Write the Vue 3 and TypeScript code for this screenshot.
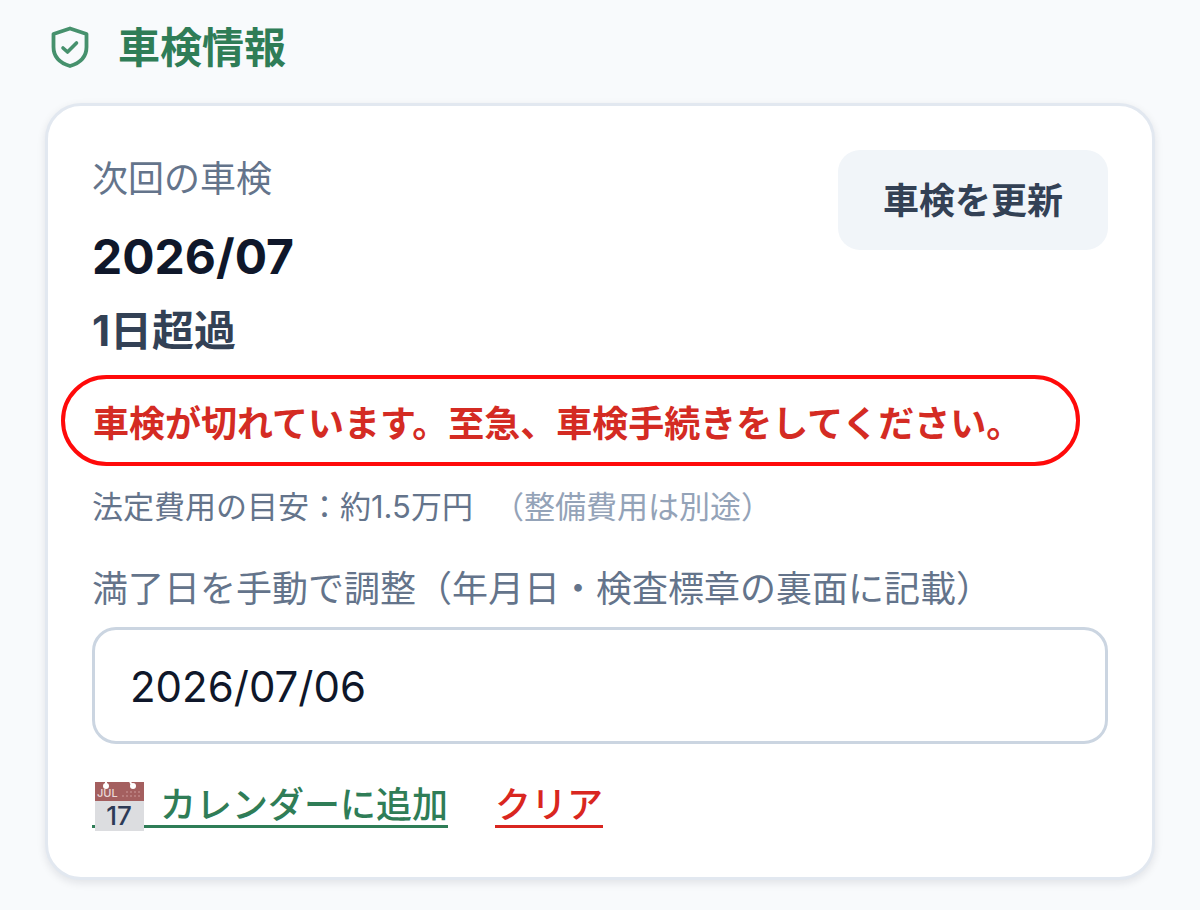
<script setup lang="ts">
import { ref } from 'vue'

const expiryDate = ref('2026/07/06')

function clearDate(): void {
  expiryDate.value = ''
}
</script>

<template>
  <main class="page">
    <header class="heading">
      <svg class="shield" viewBox="0 0 44 44" fill="none" stroke="currentColor" stroke-linejoin="round" aria-hidden="true">
        <path d="M22 2.500 L38.500 8 V21 C38.500 31 32 37 22 40 C12 37 5.500 31 5.500 21 V8 Z" stroke-width="3.800" />
        <path d="M15 22 L19.500 26 L28.500 17" stroke-width="3.600" stroke-linecap="round" />
      </svg>
      <h1 class="title">車検情報</h1>
    </header>

    <section class="card">
      <div class="top">
        <div class="summary">
          <p class="label">次回の車検</p>
          <p class="month">2026/07</p>
          <p class="overdue">1日超過</p>
        </div>
        <button class="update" type="button">車検を更新</button>
      </div>

      <p class="alert">車検が切れています。至急、車検手続きをしてください。</p>

      <p class="cost">
        <span>法定費用の目安：約1.5万円</span>
        <span class="note">（整備費用は別途）</span>
      </p>

      <label class="label field-label" for="expiry">満了日を手動で調整（年月日・検査標章の裏面に記載）</label>
      <input id="expiry" v-model="expiryDate" class="field" type="text" />

      <div class="actions">
        <a class="link add" href="#calendar">
          <svg class="calendar" viewBox="0 0 50 50" aria-hidden="true">
            <rect x="1" y="1" width="49" height="49" fill="#dcdde0" />
            <rect x="1" y="1" width="49" height="19" fill="#a45f5f" />
            <path d="M12 1 V5 M36 1 L39 5" stroke="#fff" stroke-width="2" />
            <circle cx="12" cy="5" r="3" fill="#fff" />
            <circle cx="39" cy="5" r="3" fill="#fff" />
            <text x="3" y="16" class="cal-month">JUL</text>
            <path d="M32 11 H47 M28 15 H46" stroke="#b87c7c" stroke-width="2" stroke-dasharray="2 2" />
            <text x="25" y="44" text-anchor="middle" class="cal-day">17</text>
          </svg>
          <span>カレンダーに追加</span>
        </a>
        <button class="link clear" type="button" @click="clearDate">クリア</button>
      </div>
    </section>
  </main>
</template>

<style>
body {
  background: #f8fafc;
}
</style>

<style scoped>
.page {
  box-sizing: border-box;
  padding: 20px 45px 28px;
  color: #0f172a;
  font-family: Inter, "Noto Sans CJK JP", sans-serif;
  font-size: 36px;
  line-height: 52px;
  font-variant-ligatures: no-contextual;
}

h1,
p {
  margin: 0;
}

.heading {
  display: flex;
  align-items: center;
  gap: 26px;
  height: 56px;
  color: #2f7d57;
}

.shield {
  width: 44px;
  height: 44px;
  margin-left: 3px;
  color: #46916d;
}

.title {
  font-size: 42px;
  line-height: 56px;
  font-weight: 700;
}

.card {
  margin-top: 27px;
  padding: 44px 44px 49px;
  border: 3px solid #e2e8f0;
  border-radius: 36px;
  background: #fff;
  box-shadow: 0 3px 8px rgba(15, 23, 42, 0.1);
}

.top {
  display: flex;
  justify-content: space-between;
  align-items: flex-start;
}

.summary {
  padding-top: 3px;
}

.label {
  color: #64748b;
}

.month {
  margin-top: 16px;
  font-size: 48px;
  line-height: 72px;
  font-weight: 700;
}

.overdue {
  margin-top: 8px;
  color: #334155;
  font-size: 42px;
  line-height: 60px;
  font-weight: 700;
}

.update {
  height: 100px;
  padding: 2px 45px 0;
  border: 0;
  border-radius: 22px;
  background: #f1f5f9;
  color: #334155;
  font: inherit;
  font-weight: 700;
}

.alert {
  width: fit-content;
  margin: 14px -31px 0;
  padding: 18px 54px 11px 28px;
  border: 4px solid #ff0a0a;
  border-radius: 46px;
  color: #d42b23;
  line-height: 54px;
  font-weight: 700;
}

.cost {
  display: flex;
  gap: 20px;
  margin-top: 19px;
  color: #64748b;
  font-size: 31px;
  line-height: 44px;
}

.note {
  color: #94a3b8;
}

.field-label {
  display: block;
  margin-top: 34px;
}

.field {
  display: block;
  box-sizing: border-box;
  width: 100%;
  height: 117px;
  margin-top: 12px;
  padding: 2px 35px 0;
  border: 3px solid #cbd5e1;
  border-radius: 24px;
  background: #fff;
  color: #0f172a;
  font: inherit;
  font-size: 42px;
  font-variant-ligatures: no-contextual;
}

.actions {
  display: flex;
  align-items: center;
  gap: 47px;
  margin-top: 35px;
}

.link {
  box-sizing: border-box;
  height: 49px;
  padding: 6px 0 0;
  border: 0;
  border-bottom: 3px solid currentColor;
  background: none;
  font: inherit;
  font-weight: 500;
  line-height: 40px;
  text-decoration: none;
}

.add {
  display: flex;
  gap: 16px;
  color: #2f7d57;
}

.calendar {
  width: 50px;
  height: 50px;
  margin: -4px 0 -6px 2px;
}

.cal-month {
  fill: #ead8d8;
  font-size: 11px;
}

.cal-day {
  fill: #2d3b57;
  font-size: 26px;
  font-weight: 500;
}

.clear {
  color: #d92620;
}
</style>
